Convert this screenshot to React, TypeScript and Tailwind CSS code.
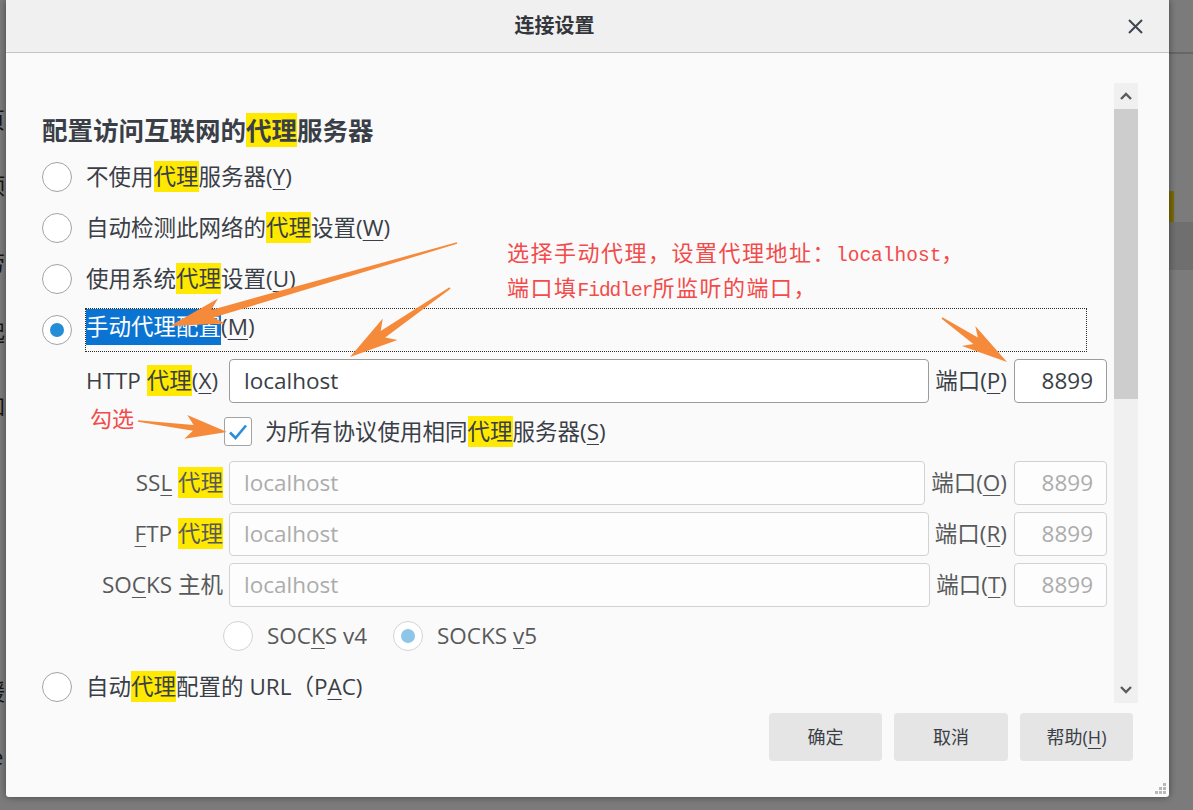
import React from "react";

type Kids = { children: React.ReactNode };

function Hl({ children }: Kids) {
  return <span className="bg-[#ffe900]">{children}</span>;
}

function U({ children }: Kids) {
  return <span className="underline decoration-1 underline-offset-[4px]">{children}</span>;
}

function Radio({ checked, disabled }: { checked?: boolean; disabled?: boolean }) {
  return (
    <span
      className={`w-[30px] h-[30px] shrink-0 rounded-full border bg-white flex items-center justify-center ${
        disabled ? "border-[#d3d3d3]" : "border-[#a3a3a3]"
      }`}
    >
      {checked && (
        <span className={`w-[14px] h-[14px] rounded-full ${disabled ? "bg-[#8fc6e7]" : "bg-[#238ed6]"}`} />
      )}
    </span>
  );
}

function Checkbox() {
  return (
    <span className="w-[28px] h-[29px] shrink-0 rounded-[3px] border border-[#a3a3a3] bg-white flex items-center justify-center">
      <svg width="20" height="18" viewBox="0 0 20 18">
        <polyline points="2,9.5 7.5,15 18,2.5" fill="none" stroke="#2a8fd8" strokeWidth="2.6" strokeLinejoin="miter" />
      </svg>
    </span>
  );
}

function ProxyRow({
  label,
  port,
  left,
  disabled,
}: {
  label: React.ReactNode;
  port: React.ReactNode;
  left?: boolean;
  disabled?: boolean;
}) {
  const labelColor = disabled ? "text-[#58595b]" : "text-[#3a3f47]";
  return (
    <div className="h-[51px] flex items-center pl-[44px]">
      <div className={`w-[143px] shrink-0 pr-[6px] whitespace-nowrap ${left ? "text-left" : "text-right"} ${labelColor}`}>
        {label}
      </div>
      <div
        className={`flex-1 h-[44px] rounded-[4px] border flex items-center px-[14px] ${
          disabled ? "border-[#d2d2d2] bg-[#fdfdfd] text-[#acacac]" : "border-[#9c9c9c] bg-white text-[#3a3f47]"
        }`}
      >
        localhost
      </div>
      <div className={`ml-[6px] mr-[7px] whitespace-nowrap ${labelColor}`}>端口{port}</div>
      <div
        className={`w-[93px] h-[44px] shrink-0 rounded-[4px] border flex items-center justify-end pr-[13px] ${
          disabled ? "border-[#d2d2d2] bg-[#fdfdfd] text-[#acacac]" : "border-[#9c9c9c] bg-white text-[#3a3f47]"
        }`}
      >
        8899
      </div>
    </div>
  );
}

function arrow(x1: number, y1: number, x2: number, y2: number, headL: number, headW: number, neckW: number) {
  const len = Math.hypot(x2 - x1, y2 - y1);
  const ux = (x2 - x1) / len;
  const uy = (y2 - y1) / len;
  const nx = -uy;
  const ny = ux;
  const bx = x2 - ux * headL;
  const by = y2 - uy * headL;
  const wx = bx - ux * headL * 0.22;
  const wy = by - uy * headL * 0.22;
  const pts = [
    [x1 + nx * 0.8, y1 + ny * 0.8],
    [bx + (nx * neckW) / 2, by + (ny * neckW) / 2],
    [wx + (nx * headW) / 2, wy + (ny * headW) / 2],
    [x2, y2],
    [wx - (nx * headW) / 2, wy - (ny * headW) / 2],
    [bx - (nx * neckW) / 2, by - (ny * neckW) / 2],
    [x1 - nx * 0.8, y1 - ny * 0.8],
  ];
  return pts.map((p) => `${p[0].toFixed(1)},${p[1].toFixed(1)}`).join(" ");
}

function Chevron({ up }: { up?: boolean }) {
  return (
    <svg width="12" height="8" viewBox="0 0 12 8">
      <polyline
        points={up ? "1,7 6,2 11,7" : "1,1 6,6 11,1"}
        fill="none"
        stroke="#5c5c5c"
        strokeWidth="2.4"
      />
    </svg>
  );
}

export default function App() {
  return (
    <div className="relative w-[1193px] h-[810px] overflow-hidden bg-[#7b7b7b] font-['Open_Sans','Noto_Sans_CJK_SC',sans-serif]">
      {/* background app peeking out behind the dialog */}
      <div className="absolute left-[-17px] top-0 flex flex-col text-[22px] text-[#161616] leading-none">
        <span className="absolute top-[108px]">页</span>
        <span className="absolute top-[174px]">预</span>
        <span className="absolute top-[251px]">劳</span>
        <span className="absolute top-[321px]">起</span>
        <span className="absolute top-[394px]">加</span>
        <span className="absolute top-[680px]">缓</span>
        <span className="absolute top-[745px] left-[8px]">e</span>
      </div>
      <div className="absolute left-[1169px] top-[52px] w-[24px] h-[2px] bg-[#666]" />
      <div className="absolute left-[1169px] top-[191px] w-[5px] h-[31px] bg-[#7a6a08]" />
      <div className="absolute left-[1169px] top-[222px] w-[24px] h-[48px] bg-[#6f6f6f]" />

      {/* dialog */}
      <div className="absolute left-[6px] top-0 w-[1163px] h-[797px] bg-[#fafafa] flex flex-col rounded-b-[3px] shadow-[0_0_7px_rgba(0,0,0,0.45)] text-[22.5px] text-[#3a3f47]">
        <div className="relative h-[53px] shrink-0 bg-[#f0f0f0] border-b border-[#c4c4c4] flex items-center justify-center pr-[66px]">
          <span className="text-[20px] font-bold text-[#33363b]">连接设置</span>
          <svg className="absolute right-[26px] top-[19px]" width="15" height="15" viewBox="0 0 15 15">
            <path d="M1 1 L14 14 M14 1 L1 14" stroke="#3f4652" strokeWidth="2" />
          </svg>
        </div>

        <div className="flex mt-[30px] h-[620px] pl-[36px] pr-[31px]">
          <div className="flex-1 overflow-hidden pr-[7px] pt-[30px]">
            <div className="h-[34px] leading-[34px] mb-[4px] text-[25.5px] font-bold whitespace-nowrap">
              配置访问互联网的<Hl>代理</Hl>服务器
            </div>

            <div className="h-[51px] flex items-center">
              <Radio />
              <span className="ml-[14px]">不使用<Hl>代理</Hl>服务器(<U>Y</U>)</span>
            </div>
            <div className="h-[51px] flex items-center">
              <Radio />
              <span className="ml-[14px]">自动检测此网络的<Hl>代理</Hl>设置(<U>W</U>)</span>
            </div>
            <div className="h-[51px] flex items-center">
              <Radio />
              <span className="ml-[14px]">使用系统<Hl>代理</Hl>设置(<U>U</U>)</span>
            </div>
            <div className="h-[51px] flex items-center">
              <Radio checked />
              <div className="ml-[13px] mr-[20px] flex-1 h-[44px] border border-dotted border-[#2a2a2a]">
                <span className="inline-block leading-[36px] bg-[#0b74d3] text-white">手动代理配置</span>
                <span className="leading-[36px]">(<U>M</U>)</span>
              </div>
            </div>

            <ProxyRow left label={<>HTTP <Hl>代理</Hl>(<U>X</U>)</>} port={<>(<U>P</U>)</>} />

            <div className="h-[51px] flex items-center pl-[182px]">
              <Checkbox />
              <span className="ml-[13px]">为所有协议使用相同<Hl>代理</Hl>服务器(<U>S</U>)</span>
            </div>

            <ProxyRow disabled label={<>SS<U>L</U> <Hl>代理</Hl></>} port={<>(<U>O</U>)</>} />
            <ProxyRow disabled label={<><U>F</U>TP <Hl>代理</Hl></>} port={<>(<U>R</U>)</>} />
            <ProxyRow disabled label={<>SO<U>C</U>KS 主机</>} port={<>(<U>T</U>)</>} />

            <div className="h-[51px] flex items-center pl-[181px] text-[#58595b]">
              <Radio disabled />
              <span className="ml-[14px] w-[126px]">SOC<U>K</U>S v4</span>
              <Radio checked disabled />
              <span className="ml-[14px]">SOCKS <U>v</U>5</span>
            </div>

            <div className="h-[51px] flex items-center">
              <Radio />
              <span className="ml-[14px]">自动<Hl>代理</Hl>配置的 URL（P<U>A</U>C)</span>
            </div>
          </div>

          <div className="w-[24px] h-full flex flex-col bg-[#f0f0f0]">
            <div className="h-[26px] flex items-center justify-center">
              <Chevron up />
            </div>
            <div className="h-[290px] bg-[#cdcdcd]" />
            <div className="flex-1" />
            <div className="h-[26px] flex items-center justify-center">
              <Chevron />
            </div>
          </div>
        </div>

        <div className="flex justify-end gap-[12px] pr-[36px] mt-[10px] text-[18px] text-[#3a3f47]">
          <button className="w-[113px] h-[48px] rounded-[4px] bg-[#e5e5e5]">确定</button>
          <button className="w-[114px] h-[48px] rounded-[4px] bg-[#e5e5e5]">取消</button>
          <button className="w-[113px] h-[48px] rounded-[4px] bg-[#e5e5e5]">帮助(<U>H</U>)</button>
        </div>

        <svg className="absolute right-[2px] bottom-[2px]" width="12" height="12" viewBox="0 0 12 12">
          <rect x="8" y="0" width="3" height="3" fill="#b8b8b8" />
          <rect x="4" y="4" width="3" height="3" fill="#b8b8b8" />
          <rect x="8" y="4" width="3" height="3" fill="#b8b8b8" />
          <rect x="0" y="8" width="3" height="3" fill="#b8b8b8" />
          <rect x="4" y="8" width="3" height="3" fill="#b8b8b8" />
          <rect x="8" y="8" width="3" height="3" fill="#b8b8b8" />
        </svg>
      </div>

      {/* annotations */}
      <svg className="absolute inset-0 pointer-events-none" width="1193" height="810" viewBox="0 0 1193 810">
        <polygon points={arrow(457, 243, 170, 326, 44, 26, 8)} fill="#f68a3b" />
        <polygon points={arrow(450, 288, 350, 357, 40, 26, 8)} fill="#f68a3b" />
        <polygon points={arrow(942, 318, 1007, 362, 38, 24, 8)} fill="#f68a3b" />
        <polygon points={arrow(138, 421, 227, 432, 34, 24, 6)} fill="#f68a3b" />
      </svg>

      <div className="absolute left-[507px] top-[236px] text-[22px] leading-[30px] tracking-[1.5px] text-[#f24b4b] font-['Noto_Sans_CJK_SC',sans-serif] whitespace-nowrap">
        <div>
          选择手动代理，设置代理地址：<span className="font-['Liberation_Mono',monospace] text-[19.5px] tracking-[0px]">localhost</span>，
        </div>
        <div>
          端口填<span className="font-['Liberation_Mono',monospace] text-[19.5px] tracking-[-1px]">Fiddler</span>所监听的端口，
        </div>
      </div>
      <div className="absolute left-[90px] top-[402px] text-[22px] leading-[30px] text-[#f24b4b] font-['Noto_Sans_CJK_SC',sans-serif]">
        勾选
      </div>
    </div>
  );
}
